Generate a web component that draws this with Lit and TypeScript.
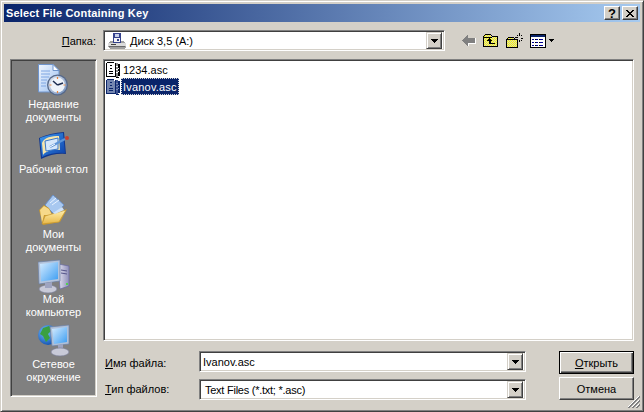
import { LitElement, html, css, svg } from "lit";
import { customElement } from "lit/decorators.js";

const defs = svg`
<svg width="0" height="0" style="position:absolute">
  <defs>
    <pattern id="dither" width="2" height="2" patternUnits="userSpaceOnUse">
      <rect width="2" height="2" fill="#ffff00"/>
      <rect width="1" height="1" fill="#d4d0c8"/>
      <rect x="1" y="1" width="1" height="1" fill="#d4d0c8"/>
    </pattern>
    <linearGradient id="pageG" x1="0" y1="0" x2="1" y2="1"><stop offset="0" stop-color="#f0f6ff"/><stop offset="1" stop-color="#9cc0f0"/></linearGradient>
    <linearGradient id="clockG" x1="0" y1="0" x2="1" y2="1"><stop offset="0" stop-color="#e8eef8"/><stop offset="1" stop-color="#6d8bb8"/></linearGradient>
    <linearGradient id="deskG" x1="0" y1="0" x2="1" y2="1"><stop offset="0" stop-color="#3f9bf0"/><stop offset="1" stop-color="#0b3fa8"/></linearGradient>
    <linearGradient id="folderG" x1="0" y1="0" x2="0" y2="1"><stop offset="0" stop-color="#fff0b0"/><stop offset="1" stop-color="#e8b848"/></linearGradient>
    <linearGradient id="screenG" x1="0" y1="0" x2="1" y2="1"><stop offset="0" stop-color="#d6ecff"/><stop offset="1" stop-color="#3b9df2"/></linearGradient>
    <linearGradient id="caseG" x1="0" y1="0" x2="1" y2="0"><stop offset="0" stop-color="#e4e4f2"/><stop offset="1" stop-color="#8e8eb8"/></linearGradient>
    <radialGradient id="globeG" cx=".4" cy=".35" r=".7"><stop offset="0" stop-color="#7fc4ff"/><stop offset="1" stop-color="#0d4fb0"/></radialGradient>
  </defs>
</svg>`;

const recentIcon = html`<svg width="32" height="32" viewBox="0 0 32 32">
  <path d="M.5 .5H15L21 6.5V28H.5Z" fill="url(#pageG)" stroke="#6f94cc"/>
  <path d="M15 .5V6.5H21Z" fill="#fff" stroke="#6f94cc"/>
  <path d="M3 7H12M3 10H12M3 13H11M3 16H9M3 19H8M3 22H8" stroke="#7ea6e2"/>
  <circle cx="19.5" cy="21" r="10.5" fill="#56698a"/>
  <circle cx="19.5" cy="21" r="9.2" fill="url(#clockG)"/>
  <circle cx="19.5" cy="21" r="7.4" fill="#eef3fa"/>
  <path d="M19.5 21L15 17M19.5 21L25 19" stroke="#1d2c50" stroke-width="1.5"/>
  <path d="M19.5 13v2M19.5 27v2M11.5 21h2M25.5 21h2" stroke="#e8833a" stroke-width="1.2"/>
</svg>`;

const desktopIcon = html`<svg width="32" height="32" viewBox="0 0 32 32">
  <path d="M1 9Q12 4 26 3L28 25Q15 24 3 30Z" fill="#10378f"/>
  <path d="M2 9Q12 5 25 4L27 24Q15 23 4 28Z" fill="url(#deskG)"/>
  <path d="M4 14C6 8 14 7 21 7L22 21C14 20 8 22 5 26Z" fill="#f7e6ad"/>
  <path d="M7 12L20 9V20L8 22Z" fill="#d6e8fb" stroke="#3a78c8"/>
  <path d="M12 18L27 10" stroke="#5d95d8" stroke-width="2"/>
  <path d="M12 18L17 15" stroke="#fff"/>
  <circle cx="29" cy="9" r="2" fill="#c84030"/>
</svg>`;

const docsIcon = html`<svg width="32" height="34" viewBox="0 0 32 34">
  <path d="M15 1L26 11L17 21L7 11Z" fill="#a8c8f0" stroke="#6a90c8"/>
  <path d="M12 9L18 4M14 11L21 6" stroke="#e8f2ff"/>
  <path d="M1 16L6 11L11 14L15 22L29 15L22 28L5 31Z" fill="#c89a30"/>
  <path d="M2 16L6 12L11 15L14 21L6 21L4 29Z" fill="#f6d98a"/>
  <path d="M7 22L28 16L21 28L4 30Z" fill="url(#folderG)" stroke="#c8982e" stroke-width=".7"/>
  <path d="M15 19L24 13L26 16L17 20Z" fill="#cfe2f8"/>
</svg>`;

const computerIcon = html`<svg width="32" height="36" viewBox="0 0 32 36">
  <path d="M20 5L31 7V27L22 30Z" fill="url(#caseG)" stroke="#6868a0" stroke-width=".7"/>
  <path d="M23 11L29 12M23 14L29 15" stroke="#55558a"/>
  <rect x="28" y="24" width="2" height="2" fill="#50d050"/>
  <path d="M0 3L22 1V22L1 25Z" fill="#b4c4dc" stroke="#6b7fa4" stroke-width=".7"/>
  <path d="M2 5L20 3V20L3 22.500Z" fill="url(#screenG)"/>
  <ellipse cx="10" cy="30" rx="9" ry="4" fill="#c8cad8" stroke="#7b7f98" stroke-width=".7"/>
  <path d="M7 24L14 23V29H7Z" fill="#9ea4c0"/>
</svg>`;

const networkIcon = html`<svg width="32" height="34" viewBox="0 1 32 34">
  <circle cx="10" cy="12" r="10" fill="url(#globeG)"/>
  <path d="M5 5L11 3L14 7L10 11L12 15L8 19L5 13L2 11Z" fill="#3aa040"/>
  <path d="M12 4L31 2V21L14 23Z" fill="#b0c0d8" stroke="#6b7fa4" stroke-width=".7"/>
  <path d="M14 6L29 4V19L16 21Z" fill="url(#screenG)"/>
  <path d="M20 22L25 21V28H20Z" fill="#9ea4c0"/>
  <ellipse cx="22" cy="29" rx="9" ry="4" fill="#c8cad8" stroke="#7b7f98" stroke-width=".7"/>
</svg>`;

const driveIcon = html`<svg class="crisp" width="18" height="16" viewBox="0 0 18 16">
  <path d="M5 0H13V10H5Z" fill="#34418c"/>
  <path d="M7 1H11V4H7Z" fill="#c8d0e8"/>
  <path d="M6 5H12V9H6Z" fill="#f4f4f4"/>
  <path d="M9 6H11V8H9Z" fill="#34418c"/>
  <path d="M0 10L3 8H5V10H13V8H15L18 10V14L16 16H2L0 14Z" fill="#a0a0a0"/>
  <path d="M0 10H18V13H0Z" fill="#dcdcdc"/>
  <path d="M1 13H17V14H1Z" fill="#686868"/>
  <path d="M3 11H8V12H3Z" fill="#404040"/>
</svg>`;

const fileIcon = (sel: boolean) => {
  const ink = sel ? "#0a246a" : "#000";
  const paper = sel ? "#7486b0" : "#fff";
  const shade = sel ? "#3e5390" : "#8a8a8a";
  return html`<svg class="crisp" width="16" height="16" viewBox="0 0 16 16">
    <path d="M1 1H2V0H9V1H2V14H10V15H1Z" fill="${ink}"/>
    <path d="M2 1H9V2H10V14H2Z" fill="${paper}"/>
    <path d="M5 3H7V4H5ZM5 6H7V7H5ZM4 9H8V10H4ZM4 11H8V12H4Z" fill="${ink}"/>
    <path d="M10 1H13V15H10Z" fill="${shade}"/>
    <path d="M10 1H11V15H10ZM13 2H15V14H13ZM11 15H14V16H11Z" fill="${ink}"/>
    <path d="M11 4H13V5H11ZM11 7H13V8H11ZM11 10H13V11H11ZM13 6H14V7H13ZM13 9H14V10H13Z" fill="${sel ? "#7486b0" : "#fff"}"/>
  </svg>`;
};

const arrow = html`<svg class="crisp" width="7" height="4" viewBox="0 0 7 4"><path d="M0 0H7V1H6V2H5V3H4V4H3V3H2V2H1V1H0Z" fill="#000"/></svg>`;

const backIcon = html`<svg class="crisp" width="14" height="11" viewBox="0 0 14 11">
  <path d="M5 0H6V3H13V8H6V11H5V10H4V9H3V8H2V7H1V6H0V5H1V4H2V3H3V2H4V1H5Z" fill="#808080"/>
  <path d="M6 8H13V3H14V9H7V11H6Z" fill="#fff"/>
</svg>`;

const upIcon = html`<svg class="crisp" width="15" height="13" viewBox="0 0 15 13">
  <path d="M.5 12.5V2.500L2.500 .5H7.500L9.500 2.500H14.500V12.500Z" fill="url(#dither)" stroke="#000"/>
  <path d="M1 3H9" stroke="#000"/>
  <path d="M6 4H7V5H8V6H9V7H8V9H12V10H6V7H4V6H5V5H6Z" fill="#000"/>
</svg>`;

const newIcon = html`<svg class="crisp" width="17" height="15" viewBox="0 0 17 15">
  <path d="M.5 14.500V6.500L2.500 4.500H7.500L9.500 6.500H11.500V14.500Z" fill="url(#dither)" stroke="#000"/>
  <path d="M1 6.500H9" stroke="#000"/>
  <path d="M13 0H14V3H13ZM13 7H14V9H13ZM9 4H12V5H9ZM15 5H17V6H15ZM11 2H12V3H11ZM15 2H16V3H15ZM15 7H16V8H15ZM11 7H12V8H11Z" fill="#000"/>
</svg>`;

const viewIcon = html`<svg class="crisp" width="16" height="14" viewBox="0 0 16 14">
  <rect x=".5" y=".5" width="15" height="13" fill="#fff" stroke="#000"/>
  <rect x="1" y="1" width="14" height="2" fill="#0a246a"/>
  <path d="M2 5H4V6H2ZM6 5H8V6H6ZM10 5H13V6H10ZM2 8H4V9H2ZM6 8H8V9H6ZM10 8H13V9H10ZM2 11H4V12H2ZM6 11H8V12H6ZM10 11H13V12H10Z" fill="#000090"/>
  <path d="M9 5H10V6H9ZM9 8H10V9H9ZM9 11H10V12H9ZM5 5H6V6H5ZM5 8H6V9H5ZM5 11H6V12H5Z" fill="#000"/>
</svg>`;

const places = [
  { h: 65, icon: recentIcon, lines: ["Недавние", "документы"] },
  { h: 65, icon: desktopIcon, lines: ["Рабочий стол"] },
  { h: 65, icon: docsIcon, lines: ["Мои", "документы"] },
  { h: 65, icon: computerIcon, lines: ["Мой", "компьютер"] },
  { h: 60, icon: networkIcon, lines: ["Сетевое", "окружение"] },
];

@customElement("app-root")
export class AppRoot extends LitElement {
  static styles = css`
    :host { display: block; width: 644px; height: 412px; overflow: hidden;
      font-family: "Liberation Sans", Arial, sans-serif; font-size: 11px; color: #000; }
    * { box-sizing: border-box; }
    .crisp { shape-rendering: crispEdges; display: block; }
    .win { width: 644px; height: 412px; background: #d4d0c8; display: flex; flex-direction: column;
      border: 1px solid; border-color: #d4d0c8 #404040 #404040 #d4d0c8;
      box-shadow: inset 1px 1px #fff, inset -1px -1px #808080; padding: 3px; position: relative; }
    .title { height: 18px; flex: none; display: flex; align-items: center; gap: 2px; padding: 0 2px;
      background: linear-gradient(90deg, #0a246a, #a6caf0); }
    .title b { flex: 1; color: #fff; font-size: 11px; font-weight: 700; letter-spacing: .17px; }
    .tbtn { width: 16px; height: 14px; background: #d4d0c8; display: flex; align-items: center; justify-content: center;
      border: 1px solid; border-color: #fff #404040 #404040 #fff; box-shadow: inset -1px -1px #808080; font-weight: 700; font-size: 13px; line-height: 1; }
    .body { flex: 1; display: flex; flex-direction: column; padding: 8px 6px 0 6px; gap: 8px; }
    .top { display: flex; height: 21px; align-items: center; }
    .top label { width: 86px; text-align: right; margin-right: 7px; }
    .field { background: #fff; display: flex; align-items: center; height: 21px;
      border: 1px solid; border-color: #808080 #fff #fff #808080;
      box-shadow: inset 1px 1px #404040, inset -1px -1px #d4d0c8; padding: 2px; }
    .field .val { flex: 1; white-space: nowrap; }
    .drop { width: 16px; height: 17px; background: #d4d0c8; display: flex; align-items: center; justify-content: center;
      border: 1px solid; border-color: #d4d0c8 #404040 #404040 #d4d0c8; box-shadow: inset 1px 1px #fff, inset -1px -1px #808080; flex: none; }
    .path { width: 342px; }
    .path .ico { margin: 0 4px 0 2px; }
    .tools { display: flex; align-items: center; margin-left: 17px; height: 21px; }
    .main { display: flex; gap: 6px; align-items: flex-start; }
    .side { width: 87px; height: 338px; background: #808080; padding-top: 2px; flex: none; color: #fff;
      border: 1px solid; border-color: #808080 #fff #fff #808080;
      box-shadow: inset 1px 1px #404040, inset -1px -1px #d4d0c8; }
    .place { display: flex; flex-direction: column; align-items: center; text-align: center; line-height: 13px; padding-top: 2px; }
    .place svg { display: block; }
    .place .ic { height: 33px; margin-bottom: 1px; }
    .right { width: 531px; display: flex; flex-direction: column; gap: 10px; }
    .list { height: 282px; background: #fff; padding: 1px 0 0 1px;
      border: 1px solid; border-color: #808080 #fff #fff #808080;
      box-shadow: inset 1px 1px #404040, inset -1px -1px #d4d0c8; }
    .file { display: flex; align-items: center; height: 17px; }
    .file .name { padding: 0 2px; height: 17px; line-height: 19px; }
    .file.sel .name { background: #0a246a; color: #fff; outline: 1px dotted #d8d8d8; outline-offset: -1px; letter-spacing: .2px; }
    .form { display: flex; }
    .labels { width: 96px; display: flex; flex-direction: column; gap: 5px; padding: 1px 0 0 2px; }
    .labels div { height: 21px; line-height: 23px; }
    .inputs { width: 327px; display: flex; flex-direction: column; gap: 7px; }
    .inputs .val { padding-left: 1px; }
    .inputs .type .val { padding-left: 3px; letter-spacing: -.25px; }
    .btns { margin-left: 33px; width: 75px; display: flex; flex-direction: column; gap: 3px; }
    .btn { height: 23px; display: flex; align-items: center; justify-content: center; background: #d4d0c8;
      border: 1px solid; border-color: #fff #404040 #404040 #fff; box-shadow: inset -1px -1px #808080; }
    .btn.def { border: 1px solid #000; box-shadow: inset 1px 1px #fff, inset -1px -1px #404040, inset -2px -2px #808080; }
    .grip { position: absolute; right: 3px; bottom: 3px; }
  `;

  render() {
    return html`${defs}
      <div class="win">
        <div class="title">
          <b>Select File Containing Key</b>
          <div class="tbtn">?</div>
          <div class="tbtn">
            <svg width="8" height="7" viewBox="0 0 8 7" class="crisp"><path d="M0 0H2V1H3V2H5V1H6V0H8V1H7V2H6V3H5V4H6V5H7V6H8V7H6V6H5V5H3V6H2V7H0V6H1V5H2V4H3V3H2V2H1V1H0Z" fill="#000"/></svg>
          </div>
        </div>
        <div class="body">
          <div class="top">
            <label><u>П</u>апка:</label>
            <div class="field path">
              <span class="ico">${driveIcon}</span>
              <span class="val">Диск 3,5 (A:)</span>
              <div class="drop">${arrow}</div>
            </div>
            <div class="tools">
              ${backIcon}
              <span style="width:7px"></span>${upIcon}
              <span style="width:8px"></span>${newIcon}
              <span style="width:7px"></span>${viewIcon}
              <span style="width:3px"></span>
              <svg class="crisp" width="5" height="3" viewBox="0 0 5 3"><path d="M0 0H5V1H4V2H3V3H2V2H1V1H0Z"/></svg>
            </div>
          </div>
          <div class="main">
            <div class="side">
              ${places.map(
                (p) => html`<div class="place" style="height:${p.h}px">
                  <div class="ic">${p.icon}</div>
                  ${p.lines.map((l) => html`<div>${l}</div>`)}
                </div>`
              )}
            </div>
            <div class="right">
              <div class="list">
                <div class="file">${fileIcon(false)}<span class="name">1234.asc</span></div>
                <div class="file sel">${fileIcon(true)}<span class="name">Ivanov.asc</span></div>
              </div>
              <div class="form">
                <div class="labels">
                  <div><u>И</u>мя файла:</div>
                  <div><u>Т</u>ип файлов:</div>
                </div>
                <div class="inputs">
                  <div class="field"><span class="val">Ivanov.asc</span><div class="drop">${arrow}</div></div>
                  <div class="field type"><span class="val">Text Files (*.txt; *.asc)</span><div class="drop">${arrow}</div></div>
                </div>
                <div class="btns">
                  <div class="btn def"><span><u>О</u>ткрыть</span></div>
                  <div class="btn">Отмена</div>
                </div>
              </div>
            </div>
          </div>
        </div>
        <svg class="grip crisp" width="13" height="13" viewBox="0 0 13 13">
          <path d="M12 1L1 12M12 5L5 12M12 9L9 12" stroke="#fff" shape-rendering="auto"/>
          <path d="M13 1L1 13M13 2L2 13M13 5L5 13M13 6L6 13M13 9L9 13M13 10L10 13" stroke="#808080" shape-rendering="auto"/>
        </svg>
      </div>`;
  }
}
